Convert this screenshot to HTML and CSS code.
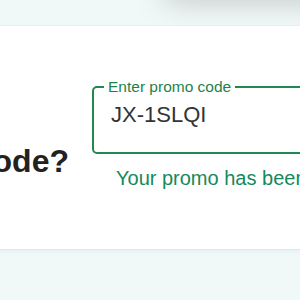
FILE: index.html
```html
<!DOCTYPE html>
<html>
<head>
<meta charset="utf-8">
<link rel="stylesheet" href="styles.css">
</head>
<body>
<div class="top"><div class="ghost"></div></div>
<main class="card">
  <div class="q"><h2 class="title">Have a promo code?</h2></div>
  <div class="field">
    <fieldset class="box">
      <legend class="label">Enter promo code</legend>
      <div class="value">JX-1SLQI</div>
    </fieldset>
    <p class="helper">Your promo has been applied</p>
  </div>
</main>
<div class="bottom"></div>
</body>
</html>
```
FILE: styles.css
```css
html, body {
  margin: 0;
  padding: 0;
}
body {
  background: #f1f8f8;
  font-family: "Liberation Sans", Arial, sans-serif;
  overflow: hidden;
  height: 300px;
}
.top {
  height: 25px;
  border-bottom: 1px solid #e7eeee;
  overflow: hidden;
}
.ghost {
  height: 30px;
  margin-top: -30px;
  margin-left: 165px;
  margin-right: -50px;
  background: #fff;
  box-shadow: 0 0 32px rgba(0, 0, 0, 0.22);
}
.card {
  background: #fff;
  height: 224px;
  display: flex;
  align-items: flex-start;
  box-shadow: 0 2px 3px rgba(0, 0, 0, 0.06);
  border-bottom: 1px solid #dfe7e7;
  box-sizing: border-box;
}
.q {
  width: 69px;
  flex: none;
  display: flex;
  justify-content: flex-end;
  margin-top: 117px;
}
.title {
  margin: 0;
  font-size: 32px;
  line-height: 36px;
  font-weight: 700;
  color: #222;
  white-space: nowrap;
}
.field {
  margin-left: 23px;
  flex: none;
  width: 260px;
}
.box {
  margin: 52px 0 0;
  padding: 0;
  border: 2px solid #23884f;
  border-radius: 5px;
  min-width: 0;
}
.label {
  margin-left: 10px;
  padding: 0 4px;
  font-size: 15.5px;
  line-height: 17px;
  color: #1f8248;
  white-space: nowrap;
}
.value {
  margin-top: 7px;
  padding: 0 0 24px 17px;
  font-size: 22px;
  line-height: 26px;
  color: #333;
}
.helper {
  margin: 13px 0 0 24px;
  font-size: 20px;
  line-height: 23px;
  color: #15895c;
  white-space: nowrap;
}
.bottom {
  height: 50px;
  background: linear-gradient(#e9f3f3, #f1f8f8 6px);
}
```
